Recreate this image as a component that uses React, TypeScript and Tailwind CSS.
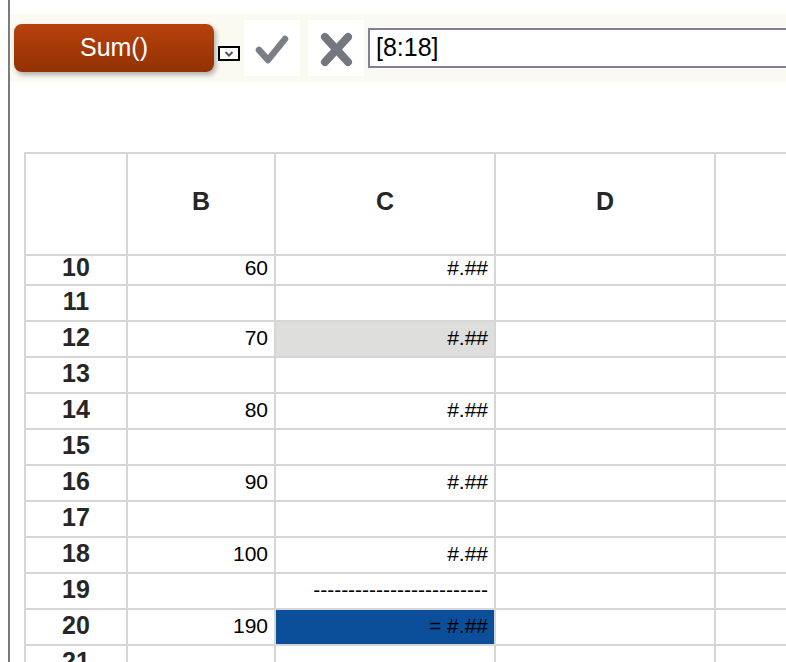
import React from "react";

const rows: { n: number; b?: string; c?: string; kind?: "gray" | "blue" }[] = [
  { n: 10, b: "60", c: "#.##" },
  { n: 11 },
  { n: 12, b: "70", c: "#.##", kind: "gray" },
  { n: 13 },
  { n: 14, b: "80", c: "#.##" },
  { n: 15 },
  { n: 16, b: "90", c: "#.##" },
  { n: 17 },
  { n: 18, b: "100", c: "#.##" },
  { n: 19, c: "-------------------------" },
  { n: 20, b: "190", c: "= #.##", kind: "blue" },
  { n: 21 },
];

function Row({ r, first }: { r: (typeof rows)[number]; first?: boolean }) {
  const cBg =
    r.kind === "gray" ? "bg-[#dededc]" : r.kind === "blue" ? "bg-[#0b4f9b]" : "bg-white";
  const cell = first ? "h-[28px] flex items-center pb-[5px]" : "h-[34px] flex items-center pb-[3px]";
  return (
    <>
      <div className={`bg-white ${cell} justify-center text-[25px] font-bold text-[#262626]`}>
        {r.n}
      </div>
      <div className={`bg-white ${cell} justify-end pr-[6px] text-[21px] text-black`}>
        {r.b}
      </div>
      <div className={`${cBg} ${cell} justify-end pr-[6px] text-[21px] text-black`}>
        {r.c}
      </div>
      <div className="bg-white" />
      <div className="bg-white" />
    </>
  );
}

export default function App() {
  return (
    <div className="w-[786px] h-[662px] overflow-hidden bg-white pl-2 font-['Liberation_Sans',Arial,sans-serif]">
      <div className="h-full border-l-2 border-[#7b7b7b] pt-[14px]">
        {/* toolbar */}
        <div className="h-[68px] bg-[#fafaf3] flex items-center pl-1 overflow-hidden">
          <button className="shrink-0 w-[200px] h-[48px] rounded-lg bg-gradient-to-b from-[#b8420c] to-[#923104] text-white text-[25px] shadow-[2px_3px_5px_rgba(0,0,0,0.3)]">
            Sum()
          </button>
          <div className="shrink-0 ml-1 mt-[11px] w-[22px] h-[15px] border-2 border-black bg-white flex items-center justify-center">
            <svg width="10" height="6" viewBox="0 0 10 6">
              <path d="M1.5 1 L5 4.5 L8.5 1" fill="none" stroke="#555" strokeWidth="2" />
            </svg>
          </div>
          <div className="shrink-0 ml-1 w-14 h-14 bg-white flex items-center justify-center">
            <svg width="56" height="56" viewBox="0 0 56 56">
              <path d="M15 30 L24 40 L41 19" fill="none" stroke="#7a7f85" strokeWidth="6.5" strokeLinecap="round" strokeLinejoin="round" />
            </svg>
          </div>
          <div className="shrink-0 ml-2 w-14 h-14 bg-white flex items-center justify-center">
            <svg width="56" height="56" viewBox="0 0 56 56">
              <path d="M17 17 L40 42 M40 17 L17 42" fill="none" stroke="#73787e" strokeWidth="8" strokeLinecap="round" />
            </svg>
          </div>
          <div className="shrink-0 ml-1 w-[460px] h-[40px] border-2 border-[#7f8196] bg-white flex items-center pl-[6px] text-[25px] text-black">
            [8:18]
          </div>
        </div>

        {/* sheet */}
        <div className="mt-[70px] ml-[14px] w-[900px]">
          <div className="grid grid-cols-[100px_146px_218px_218px_218px] gap-[2px] p-[2px] pr-0 bg-[#d6d6d6]">
            <div className="bg-white h-[100px]" />
            {["B", "C", "D", ""].map((h, i) => (
              <div key={i} className="bg-white h-[100px] flex items-center justify-center pb-1 text-[25px] font-bold text-[#262626]">
                {h}
              </div>
            ))}
            {rows.map((r, i) => (
              <Row key={r.n} r={r} first={i === 0} />
            ))}
          </div>
        </div>
      </div>
    </div>
  );
}
